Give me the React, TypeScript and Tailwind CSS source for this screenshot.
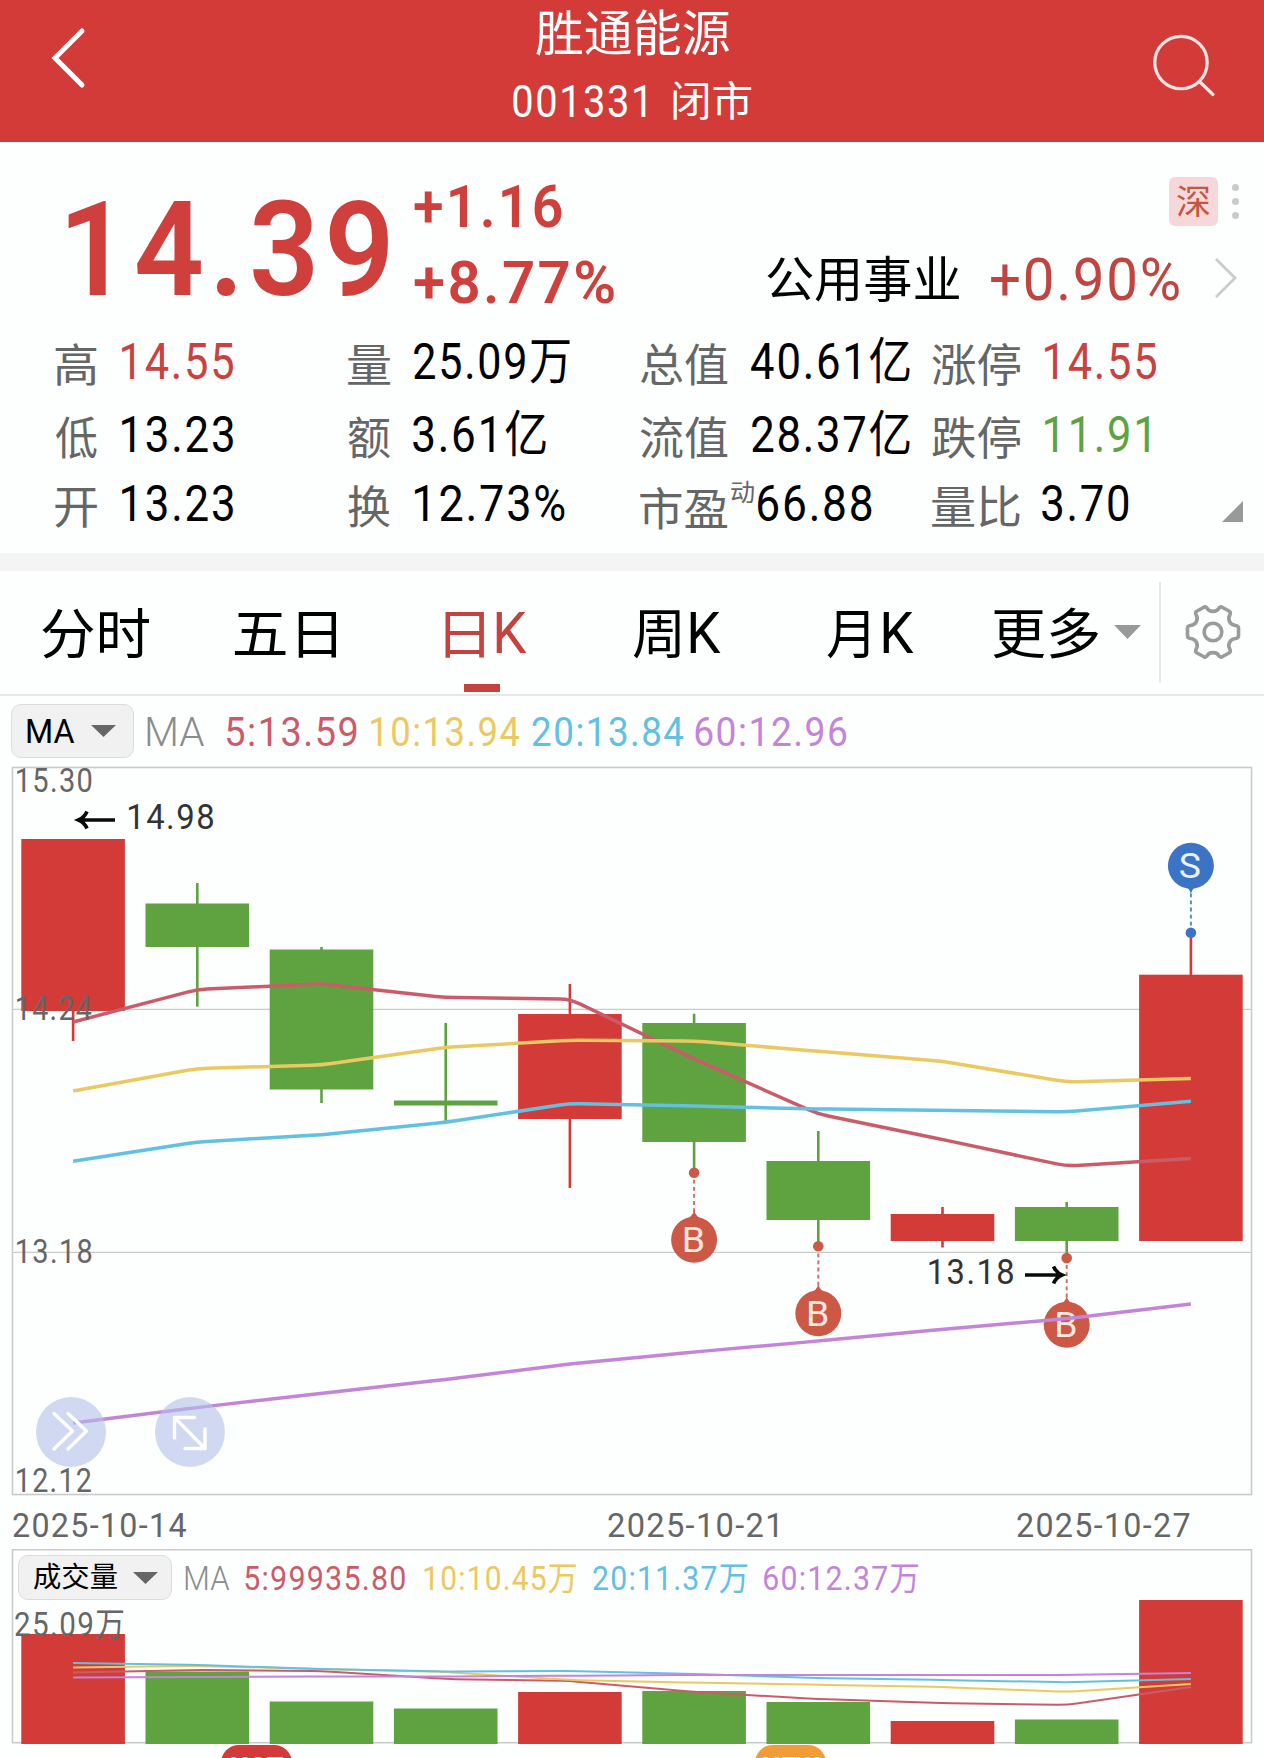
import { useLayoutEffect, useRef, useState } from 'react'
import type { ReactNode } from 'react'

const DIN = "Roboto, 'Noto Sans CJK SC', sans-serif"

/* Ink box of a string in the given font. */
function inkBox(text: string, font: string, spacing = '0px') {
  const ctx = document.createElement('canvas').getContext('2d')
  if (!ctx) return { left: 0, width: 1 }
  ctx.font = font
  ctx.letterSpacing = spacing
  const m = ctx.measureText(text)
  return { left: -m.actualBoundingBoxLeft, width: m.actualBoundingBoxLeft + m.actualBoundingBoxRight }
}

/* Narrows a run of text so that its ink fills the box given by the width class. */
function Fit({ children, className = '' }: { children: string; className?: string }) {
  const outer = useRef<HTMLSpanElement>(null)
  const [transform, setTransform] = useState('none')
  useLayoutEffect(() => {
    const el = outer.current
    if (!el) return
    const cs = getComputedStyle(el)
    const spacing = cs.letterSpacing === 'normal' ? '0px' : cs.letterSpacing
    const box = inkBox(children, `${cs.fontWeight} ${cs.fontSize} ${cs.fontFamily}`, spacing)
    const s = el.clientWidth / box.width
    setTransform(`translateX(${-box.left * s}px) scaleX(${s})`)
  }, [children])
  return (
    <span ref={outer} className={`block shrink-0 whitespace-nowrap leading-none ${className}`}>
      <span className="inline-block origin-left" style={{ transform }}>
        {children}
      </span>
    </span>
  )
}

/* Chart label: ink starts at x, spans w, baseline at y. */
function Label({ x, y, w, size, fill, children }: { x: number; y: number; w: number; size: number; fill: string; children: string }) {
  const spacing = children.length > 1 ? size * 0.045 : 0
  const box = inkBox(children, `400 ${size}px ${DIN}`, `${spacing}px`)
  const s = w / box.width
  return (
    <text fontFamily={DIN} fontSize={size} letterSpacing={spacing} fill={fill} transform={`translate(${x - box.left * s} ${y}) scale(${s} 1)`}>
      {children}
    </text>
  )
}

const RED = '#d23b37'
const GREEN = '#5fa240'
const C5 = '#cc5b6a'
const C10 = '#ebc960'
const C20 = '#62c0e2'
const C60 = '#c384d9'

const cx = (i: number) => 73.1 + i * 124.2

type Candle = { up: boolean; high: number; top: number; bottom: number; low: number; vol: number }
const candles: Candle[] = [
  { up: true, high: 839, top: 839, bottom: 1011, low: 1041, vol: 1634 },
  { up: false, high: 883, top: 903.5, bottom: 947, low: 1006.7, vol: 1671.5 },
  { up: false, high: 947, top: 949.5, bottom: 1089.5, low: 1103, vol: 1701.5 },
  { up: false, high: 1023, top: 1100.5, bottom: 1105.5, low: 1121, vol: 1708.5 },
  { up: true, high: 984, top: 1014, bottom: 1119, low: 1188, vol: 1692 },
  { up: false, high: 1013.7, top: 1023, bottom: 1142, low: 1168, vol: 1691 },
  { up: false, high: 1131, top: 1161, bottom: 1220, low: 1242, vol: 1702 },
  { up: true, high: 1207, top: 1214, bottom: 1241, low: 1247.5, vol: 1721 },
  { up: false, high: 1202, top: 1207, bottom: 1241, low: 1254, vol: 1719.5 },
  { up: true, high: 938, top: 974.7, bottom: 1241, low: 1241, vol: 1600 },
]

const priceLines = [
  { color: C5, ys: [1022, 989.5, 983.8, 997.5, 999, 1059, 1114, 1139.5, 1166, 1158.5] },
  { color: C10, ys: [1091, 1068.5, 1065, 1047.3, 1040.3, 1041, 1051.3, 1061.3, 1082, 1078.5] },
  { color: C20, ys: [1161.3, 1142, 1134.7, 1122.3, 1103.5, 1106, 1109, 1110.3, 1111.8, 1101.3] },
  { color: C60, ys: [1423, 1407.5, 1393.3, 1379.5, 1364, 1352, 1341, 1329.3, 1318.7, 1304] },
]

const volumeLines = [
  { color: C5, ys: [1672.5, 1670, 1671, 1679, 1681, 1692, 1699, 1703, 1705, 1687] },
  { color: C10, ys: [1667.5, 1666, 1669, 1672, 1680, 1682.7, 1684.7, 1687, 1691.8, 1684] },
  { color: C20, ys: [1663, 1665, 1669, 1671.5, 1671, 1674, 1678, 1680, 1682.3, 1679] },
  { color: C60, ys: [1677.5, 1677, 1676.5, 1676.5, 1675.7, 1675, 1675, 1675, 1675, 1673] },
]

/* Polyline with a short curve at each joint. */
function smooth(ys: number[]) {
  let d = `M${cx(0)} ${ys[0]}`
  for (let i = 1; i < ys.length - 1; i++) {
    const t = 0.08
    const ax = cx(i) - 124.2 * t
    const ay = ys[i] + (ys[i - 1] - ys[i]) * t
    const bx = cx(i) + 124.2 * t
    const by = ys[i] + (ys[i + 1] - ys[i]) * t
    d += ` L${ax} ${ay} Q${cx(i)} ${ys[i]} ${bx} ${by}`
  }
  return d + ` L${cx(ys.length - 1)} ${ys[ys.length - 1]}`
}

function Marker({ x, dot, tip, center, color, letter }: { x: number; dot: number; tip: number; center: number; color: string; letter: string }) {
  const dir = tip < center ? 1 : -1
  const edge = tip + dir * 8
  return (
    <g>
      <line x1={x} x2={x} y1={dot} y2={tip} stroke={color} strokeWidth="2" strokeDasharray="3.8 3.3" opacity="0.85" />
      <circle cx={x} cy={dot} r="5.3" fill={color} />
      <path d={`M${x} ${tip - dir * 2} Q${x + 1} ${tip + dir * 4} ${x + 9} ${edge} L${x - 9} ${edge} Q${x - 1} ${tip + dir * 4} ${x} ${tip - dir * 2}Z`} fill={color} />
      <circle cx={x} cy={center} r="23" fill={color} />
      <Label x={x - (letter === 'S' ? 11 : 10.3)} y={center + 12.5} w={20} size={35.5} fill={letter === 'S' ? '#e6f2fc' : '#fbe6e0'}>
        {letter}
      </Label>
    </g>
  )
}

function PriceChart() {
  return (
    <svg className="block h-[738px] w-full" viewBox="0 766 1264 738">
      <g fill="none" stroke="#cacccb" strokeWidth="1.6">
        <rect x="12.5" y="767.5" width="1239" height="727" />
        <path d="M12 1009.3H1252M12 1252.3H1252" strokeWidth="1.2" />
      </g>
      {candles.map((c, i) => {
        const color = c.up ? RED : GREEN
        return (
          <g key={i} fill={color}>
            <rect x={cx(i) - 1.3} y={c.high} width="2.6" height={c.low - c.high} />
            <rect x={cx(i) - 51.8} y={c.top} width="103.6" height={c.bottom - c.top} />
          </g>
        )
      })}
      <Marker x={cx(5)} dot={1172.7} tip={1212} center={1239.7} color="#cc5945" letter="B" />
      <Marker x={cx(6)} dot={1246.3} tip={1286} center={1313.3} color="#cc5945" letter="B" />
      <Marker x={cx(8)} dot={1258} tip={1298} center={1324.8} color="#cc5945" letter="B" />
      <Marker x={cx(9)} dot={932.7} tip={892} center={865.7} color="#3c74c5" letter="S" />
      {priceLines.map((l) => (
        <path key={l.color} d={smooth(l.ys)} fill="none" stroke={l.color} strokeWidth="3.5" />
      ))}
      <Label x={16.5} y={791.7} w={75} size={33} fill="#666666">15.30</Label>
      <Label x={16.5} y={1019.7} w={75} size={33} fill="#666666">14.24</Label>
      <Label x={16.5} y={1262.5} w={75} size={33} fill="#666666">13.18</Label>
      <Label x={16.5} y={1491.8} w={75} size={33} fill="#666666">12.12</Label>
      <Label x={129} y={828.5} w={84.5} size={36} fill="#333333">14.98</Label>
      <Label x={929.5} y={1284.3} w={84} size={36} fill="#333333">13.18</Label>
      <g fill="none" stroke="#0a0a0a" strokeWidth="3.6">
        <path d="M115 820H79M87 811.5Q84.500 817.500 78.500 820Q84.500 822.500 87 828.500" />
        <path d="M1025 1275H1061M1053.500 1266.500Q1056 1272.500 1062 1275Q1056 1277.500 1053.500 1283.500" />
      </g>
      <g>
        <circle cx="71" cy="1432" r="35" fill="#b4bfe9" fillOpacity="0.6" />
        <circle cx="190" cy="1432" r="35" fill="#b4bfe9" fillOpacity="0.6" />
        <g fill="none" stroke="#fff" strokeWidth="3.400" strokeLinecap="round" strokeLinejoin="round">
          <path d="M54 1413.500L72.500 1431L54 1449M68 1413.500L86.500 1431L68 1449" />
          <path d="M174.500 1438V1417.500H194.500M174.500 1417.500L205 1448.500M205 1429V1448.500H185" />
        </g>
      </g>
    </svg>
  )
}

function Caret({ className, color }: { className: string; color: string }) {
  return (
    <svg className={`block shrink-0 ${className}`} viewBox="0 0 26 13" preserveAspectRatio="none">
      <path d="M0 0H26L13 13Z" fill={color} />
    </svg>
  )
}

type Stat = { label: string; lc: string; value: string; vc: string; sup?: string }
const statRows: { className: string; cells: Stat[] }[] = [
  {
    className: 'h-[73px]',
    cells: [
      { label: '高', lc: 'w-[42px]', value: '14.55', vc: 'ml-[25px] w-[111px] text-[#c9423f]' },
      { label: '量', lc: 'w-[42px]', value: '25.09万', vc: 'ml-[24px] w-[156px]' },
      { label: '总值', lc: 'w-[88px]', value: '40.61亿', vc: 'ml-[23px] w-[159px]' },
      { label: '涨停', lc: 'w-[88px]', value: '14.55', vc: 'ml-[25px] w-[111px] text-[#c9423f]' },
    ],
  },
  {
    className: 'h-[73px]',
    cells: [
      { label: '低', lc: 'w-[42px]', value: '13.23', vc: 'ml-[25px] w-[111px]' },
      { label: '额', lc: 'w-[42px]', value: '3.61亿', vc: 'ml-[23px] w-[133px]' },
      { label: '流值', lc: 'w-[88px]', value: '28.37亿', vc: 'ml-[24px] w-[158px]' },
      { label: '跌停', lc: 'w-[88px]', value: '11.91', vc: 'ml-[25px] w-[104px] text-[#5fa240]' },
    ],
  },
  {
    className: 'h-[65px]',
    cells: [
      { label: '开', lc: 'w-[42px]', value: '13.23', vc: 'ml-[25px] w-[111px]' },
      { label: '换', lc: 'w-[42px]', value: '12.73%', vc: 'ml-[25px] w-[150px]' },
      { label: '市盈', lc: 'w-[88px] pt-1', value: '66.88', vc: 'ml-1 w-[114px]', sup: '动' },
      { label: '量比', lc: 'w-[88px]', value: '3.70', vc: 'ml-[22px] w-[87px]' },
    ],
  },
]

function Stats() {
  return (
    <section className="relative h-[229px] pt-[2px] pl-[55px]">
      {statRows.map((row, r) => (
        <div key={r} className={`grid grid-cols-[293px_292px_292px_1fr] items-center ${row.className}`}>
          {row.cells.map((c) => (
            <div key={c.label} className="flex items-center">
              <Fit className={`text-[45px] text-[#666666] ${c.lc}`}>{c.label}</Fit>
              {c.sup && <Fit className="-mt-7 ml-[3px] w-[23px] text-[24px] text-[#666666]">{c.sup}</Fit>}
              <Fit className={`font-[Roboto,'Noto_Sans_CJK_SC',sans-serif] text-[49.5px] tracking-[0.04em] ${c.vc}`}>{c.value}</Fit>
            </div>
          ))}
        </div>
      ))}
      <svg className="absolute top-[177px] left-[1222px] h-[21px] w-[21px]" viewBox="0 0 21 21">
        <path d="M21 0V21H0Z" fill="#999" />
      </svg>
    </section>
  )
}

function Tabs() {
  const tab = 'flex h-full items-center'
  const k = "font-[Roboto,'Noto_Sans_CJK_SC',sans-serif] text-[58px]"
  return (
    <nav className="flex h-[125px] items-center border-b-2 border-[#e6e8e7] pl-[42px] text-[54px]">
      <div className={tab}><Fit className="-mt-1 w-[107px]">分时</Fit></div>
      <div className={`${tab} ml-[86px]`}><Fit className="-mt-1 w-[101px]">五日</Fit></div>
      <div className={`${tab} relative ml-[109px] text-[#c6423f]`}>
        <Fit className="-mt-1 w-[39px]">日</Fit>
        <Fit className={`ml-3 w-[31px] ${k}`}>K</Fit>
        <span className="absolute bottom-[2px] left-[19px] h-2 w-9 bg-[#c6423f]" />
      </div>
      <div className={`${tab} ml-[106px]`}>
        <Fit className="-mt-1 w-[47px]">周</Fit>
        <Fit className={`ml-[10px] w-[31px] ${k}`}>K</Fit>
      </div>
      <div className={`${tab} ml-[106px]`}>
        <Fit className="-mt-1 w-[42px]">月</Fit>
        <Fit className={`ml-[14px] w-[31px] ${k}`}>K</Fit>
      </div>
      <div className={`${tab} ml-[79px]`}>
        <Fit className="-mt-1 w-[105px]">更多</Fit>
        <Caret className="-mt-px ml-[16px] h-[14px] w-[27px]" color="#999" />
      </div>
      <span className="ml-[18px] h-[101px] w-[2px] bg-[#e6e8e7]" />
      <svg className="-mt-[2px] ml-[24px] h-[56px] w-[56px]" viewBox="-28 -28 56 56" fill="none" stroke="#9b9b9b" strokeWidth="3.600" strokeLinejoin="round">
        <path d="M-9.500 -24.500Q-8 -26 -6 -24C-4 -19.500 4 -19.500 6 -24Q8 -26 9.500 -24.500L16 -21Q18 -20 17 -17.500C14 -12.500 17 -7 22.500 -6.500Q25.500 -6 25.500 -4V4Q25.500 6 22.500 6.500C17 7 14 12.500 17 17.500Q18 20 16 21L9.500 24.500Q8 26 6 24C4 19.500 -4 19.500 -6 24Q-8 26 -9.500 24.500L-16 21Q-18 20 -17 17.500C-14 12.500 -17 7 -22.500 6.500Q-25.500 6 -25.500 4V-4Q-25.500 -6 -22.500 -6.500C-17 -7 -14 -12.500 -17 -17.500Q-18 -20 -16 -21Z" />
        <circle r="8.800" />
      </svg>
    </nav>
  )
}

function Selector({ className, children }: { className: string; children: ReactNode }) {
  return (
    <button className={`flex shrink-0 items-center rounded-[10px] border border-[#dcdcdc] bg-[#f1f1f1] text-black ${className}`}>
      {children}
    </button>
  )
}

function Volume() {
  return (
    <section className="relative h-[209px]">
      <svg className="block h-[209px] w-full" viewBox="0 1549 1264 209">
        <rect x="12.500" y="1549.700" width="1239" height="193" fill="none" stroke="#cacccb" strokeWidth="1.600" />
        {candles.map((c, i) => (
          <rect key={i} x={cx(i) - 51.8} y={c.vol} width="103.600" height={1744 - c.vol} fill={c.up ? RED : GREEN} />
        ))}
        {volumeLines.map((l) => (
          <path key={l.color} d={smooth(l.ys)} fill="none" stroke={l.color} strokeWidth="2" />
        ))}
        <Label x={15} y={1635.5} w={108} size={33} fill="#666666">25.09万</Label>
      </svg>
      <div className="absolute top-[6px] left-[18px] flex items-center font-[Roboto,'Noto_Sans_CJK_SC',sans-serif] text-[33px]">
        <Selector className="h-[45px] w-[154px] pl-[15px]">
          <Fit className="w-[83px] text-[28px]">成交量</Fit>
          <Caret className="ml-4 h-3 w-[25px]" color="#666" />
        </Selector>
        <Fit className="mt-[2px] ml-[13px] w-[45px] font-light text-[#8c8c8c]">MA</Fit>
        <Fit className="mt-[2px] ml-[15px] w-[160px] tracking-[0.04em] text-[#cc5b6a]">5:99935.80</Fit>
        <Fit className="mt-[2px] ml-[19px] w-[152px] tracking-[0.04em] text-[#ebc960]">10:10.45万</Fit>
        <Fit className="mt-[2px] ml-[17px] w-[154px] tracking-[0.04em] text-[#62c0e2]">20:11.37万</Fit>
        <Fit className="mt-[2px] ml-[17px] w-[154px] tracking-[0.04em] text-[#c384d9]">60:12.37万</Fit>
      </div>
      <div className="absolute top-[196px] left-[221px] h-[36px] w-[71px] rounded-[18px] bg-[#d23b37] pt-[9px] text-center font-[Roboto] text-[27px] leading-[28px] font-bold text-white">HOT</div>
      <div className="absolute top-[196px] left-[755px] h-[36px] w-[71px] rounded-[18px] bg-[#f29c38] pt-[9px] text-center font-[Roboto] text-[27px] leading-[28px] font-bold text-white">NEW</div>
    </section>
  )
}

export default function App() {
  return (
    <main className="h-[1758px] w-[1264px] overflow-hidden bg-[#fdfefe] font-['Noto_Sans_CJK_SC',sans-serif] text-black">
      <header className="grid h-[142px] grid-cols-[1fr_240px_1fr] bg-[#d23b37] text-white">
        <svg className="mt-[26px] ml-[48px] h-[64px] w-[40px]" viewBox="48 26 40 64" fill="none" stroke="#fff" strokeWidth="5" strokeLinecap="round" strokeLinejoin="miter">
          <path d="M82 31L55 58L82 85" />
        </svg>
        <div className="flex flex-col items-center">
          <h1 className="flex h-[61px] items-center"><Fit className="w-[193px] text-[48.5px]">胜通能源</Fit></h1>
          <div className="flex h-[80px] items-center">
            <Fit className="w-[133px] font-[Roboto] text-[45px] tracking-[0.04em]">001331</Fit>
            <Fit className="-mt-1.5 ml-[27px] w-[78px] text-[41px]">闭市</Fit>
          </div>
        </div>
        <svg className="mt-[32px] mr-[44px] h-[68px] w-[68px] justify-self-end" viewBox="1152 32 68 68" fill="none" stroke="#fbe4e2" strokeWidth="3.200" strokeLinecap="round">
          <circle cx="1181" cy="62.500" r="26.200" />
          <path d="M1199.500 81.500L1213 94.500" />
        </svg>
      </header>

      <section className="flex h-[182px] pl-[68px] text-[#cf3f3b]">
        <Fit className="mt-[43px] w-[320px] font-[Roboto] text-[131px] font-semibold tracking-[0.04em]">14.39</Fit>
        <div className="ml-[26px] flex w-[200px] shrink-0 flex-col pt-[36px]">
          <Fit className="w-[148px] font-[Roboto] text-[58.5px] font-semibold tracking-[0.04em]">+1.16</Fit>
          <Fit className="mt-[17px] w-[200px] font-[Roboto] text-[58.5px] font-semibold tracking-[0.04em]">+8.77%</Fit>
        </div>
        <div className="ml-[153px] flex grow flex-col pt-[35px]">
          <div className="flex h-[49px] items-center pl-[402px]">
            <span className="flex h-[49px] w-[49px] shrink-0 items-center justify-center rounded-md bg-[#f6d8db] text-[#c4563d]">
              <Fit className="-mt-1 w-[33px] text-[34px]">深</Fit>
            </span>
            <span className="ml-[14px] flex flex-col gap-[7px]">
              <i className="h-[7px] w-[7px] rounded-full bg-[#cacaca]" />
              <i className="h-[7px] w-[7px] rounded-full bg-[#cacaca]" />
              <i className="h-[7px] w-[7px] rounded-full bg-[#cacaca]" />
            </span>
          </div>
          <div className="mt-[24px] flex h-[58px] items-center">
            <Fit className="-mt-1.5 w-[192px] text-[48.5px] text-black">公用事业</Fit>
            <Fit className="ml-[32px] w-[188px] font-[Roboto] text-[59px] tracking-[0.03em] text-[#c04440]">+0.90%</Fit>
            <svg className="-mt-[2px] ml-[34px] h-[44px] w-[26px]" viewBox="0 0 26 44" fill="none" stroke="#cbcbcb" strokeWidth="2.800">
              <path d="M3 3L22 22L3 41" />
            </svg>
          </div>
        </div>
      </section>

      <Stats />
      <div className="h-[18px] bg-[#f4f4f4]" />
      <Tabs />

      <section className="flex h-[70px] items-center pl-[11px] font-[Roboto] text-[41px]">
        <Selector className="h-[54px] w-[123px] pl-[15px]">
          <Fit className="w-[48px] text-[33px]">MA</Fit>
          <Caret className="ml-4 h-3 w-[25px]" color="#666" />
        </Selector>
        <Fit className="mt-[2px] ml-[13px] w-[58px] font-light text-[#8c8c8c]">MA</Fit>
        <Fit className="mt-[2px] ml-[22px] w-[130px] tracking-[0.04em] text-[#cc5b6a]">5:13.59</Fit>
        <Fit className="mt-[2px] ml-[14px] w-[149px] tracking-[0.04em] text-[#ebc960]">10:13.94</Fit>
        <Fit className="mt-[2px] ml-[12px] w-[152px] tracking-[0.04em] text-[#62c0e2]">20:13.84</Fit>
        <Fit className="mt-[2px] ml-[11px] w-[152px] tracking-[0.04em] text-[#c384d9]">60:12.96</Fit>
      </section>

      <PriceChart />

      <div className="flex h-[45px] items-center pb-[2px] pl-[13px] font-[Roboto] text-[33px] tracking-[0.04em] text-[#666666]">
        <Fit className="w-[173px]">2025-10-14</Fit>
        <Fit className="ml-[422px] w-[169px]">2025-10-21</Fit>
        <Fit className="ml-[240px] w-[173px]">2025-10-27</Fit>
      </div>

      <Volume />
    </main>
  )
}
